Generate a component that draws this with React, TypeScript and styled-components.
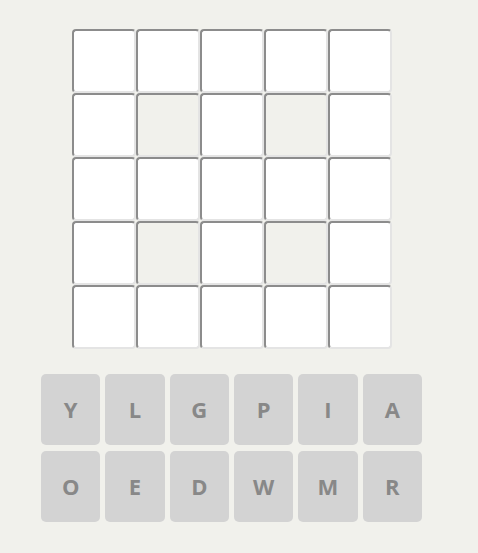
import React from "react";
import styled, { createGlobalStyle } from "styled-components";

const Global = createGlobalStyle`
  html, body { margin: 0; padding: 0; background: #f1f1ec; }
  body { font-family: "Open Sans", "Noto Sans", sans-serif; }
`;

const Page = styled.div`
  width: 463px;
  display: flex;
  flex-direction: column;
  align-items: center;
  padding-top: 29px;
  gap: 25px;
`;

const Board = styled.div`
  display: grid;
  grid-template-columns: repeat(5, 64px);
  grid-auto-rows: 64px;
`;

const Cell = styled.div<{ $open: boolean }>`
  box-sizing: border-box;
  background: ${(p) => (p.$open ? "#ffffff" : "transparent")};
  border: 2px solid;
  border-color: #8c8c8c #e4e4e4 #e4e4e4 #8c8c8c;
  border-radius: 4px;
`;

const Keys = styled.div`
  width: 381px;
  display: grid;
  grid-template-columns: repeat(6, 1fr);
  grid-auto-rows: 71px;
  column-gap: 5px;
  row-gap: 6px;
`;

const Key = styled.button`
  border: none;
  border-radius: 5px;
  background: #d3d3d3;
  color: #888888;
  font-family: "Open Sans", "Noto Sans", sans-serif;
  font-weight: 700;
  font-size: 22px;
  padding: 0 0 2px;
  display: flex;
  align-items: center;
  justify-content: center;
`;

const blocked = new Set(["1-1", "1-3", "3-1", "3-3"]);
const letters = ["Y", "L", "G", "P", "I", "A", "O", "E", "D", "W", "M", "R"];

export default function App() {
  return (
    <>
      <Global />
      <Page>
        <Board>
          {Array.from({ length: 25 }, (_, i) => {
            const r = Math.floor(i / 5);
            const c = i % 5;
            return <Cell key={i} $open={!blocked.has(`${r}-${c}`)} />;
          })}
        </Board>
        <Keys>
          {letters.map((l) => (
            <Key key={l}>{l}</Key>
          ))}
        </Keys>
      </Page>
    </>
  );
}
